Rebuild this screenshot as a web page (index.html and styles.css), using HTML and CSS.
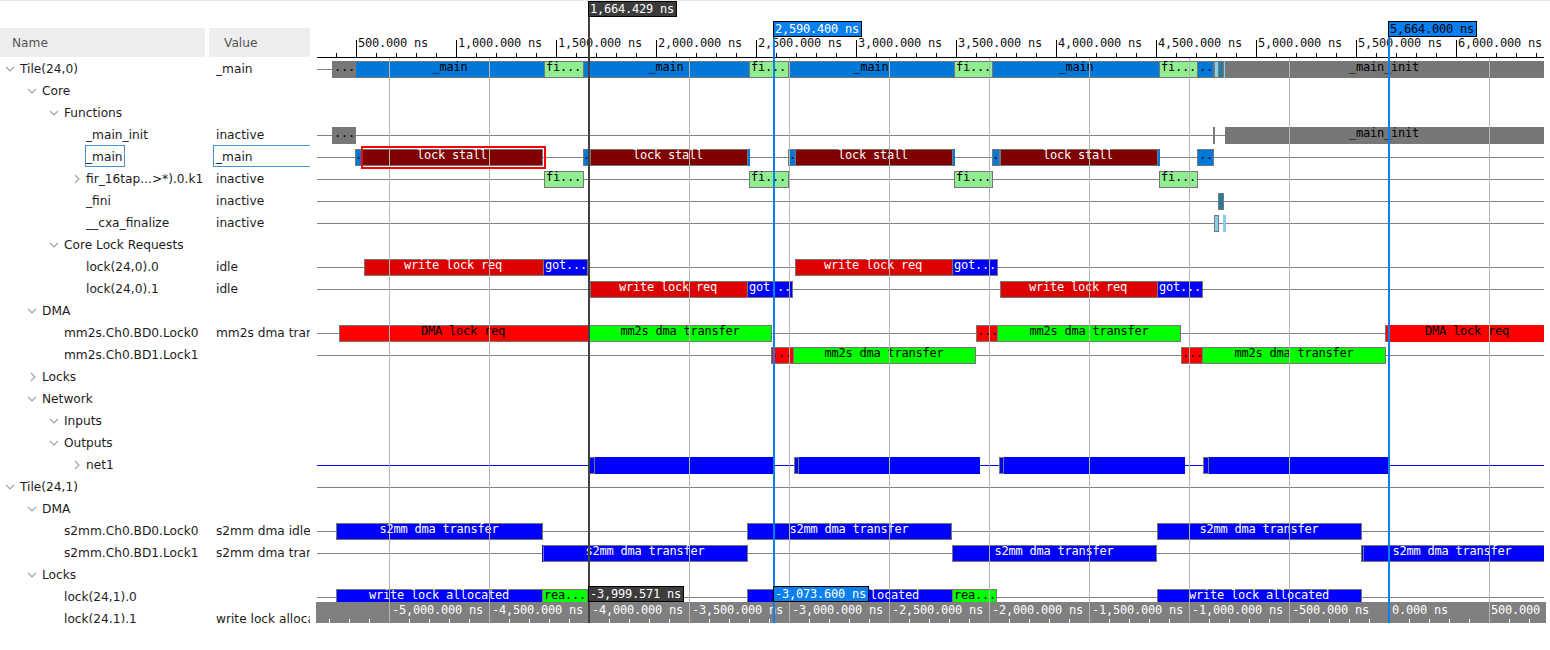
FILE: index.html
```html
<!DOCTYPE html>
<html>
<head>
  <title>Trace viewer</title>
  <link rel="stylesheet" href="styles.css">
</head>
<body>
  <svg width="0" height="0" class="defs">
    <defs>
      <polyline id="down" points="1,1 5,5 9,1"/>
      <polyline id="right" points="2,0 6,4 2,8"/>
    </defs>
  </svg>
  <div class="app">
    <div class="tree">
      <div class="head">
        <div class="head-name">Name</div>
        <div class="head-value">Value</div>
      </div>
      <div class="row l0"><div class="name"><svg class="chev"><use href="#down" y="3"/></svg>Tile(24,0)</div><div class="value">_main</div></div>
      <div class="row l1"><div class="name"><svg class="chev"><use href="#down" y="3"/></svg>Core</div><div class="value"></div></div>
      <div class="row l2"><div class="name"><svg class="chev"><use href="#down" y="3"/></svg>Functions</div><div class="value"></div></div>
      <div class="row l3"><div class="name"><span class="nochev"></span>_main_init</div><div class="value">inactive</div></div>
      <div class="row l3 selected"><div class="name"><span class="nochev"></span><span class="sel-name">_main</span></div><div class="value"><span class="sel-value">_main</span></div></div>
      <div class="row l3"><div class="name"><svg class="chev"><use href="#right" x="2" y="2"/></svg>fir_16tap...&gt;*).0.k1</div><div class="value">inactive</div></div>
      <div class="row l3"><div class="name"><span class="nochev"></span>_fini</div><div class="value">inactive</div></div>
      <div class="row l3"><div class="name"><span class="nochev"></span>__cxa_finalize</div><div class="value">inactive</div></div>
      <div class="row l2"><div class="name"><svg class="chev"><use href="#down" y="3"/></svg>Core Lock Requests</div><div class="value"></div></div>
      <div class="row l3"><div class="name"><span class="nochev"></span>lock(24,0).0</div><div class="value">idle</div></div>
      <div class="row l3"><div class="name"><span class="nochev"></span>lock(24,0).1</div><div class="value">idle</div></div>
      <div class="row l1"><div class="name"><svg class="chev"><use href="#down" y="3"/></svg>DMA</div><div class="value"></div></div>
      <div class="row l2"><div class="name"><span class="nochev"></span>mm2s.Ch0.BD0.Lock0</div><div class="value">mm2s dma transfer</div></div>
      <div class="row l2"><div class="name"><span class="nochev"></span>mm2s.Ch0.BD1.Lock1</div><div class="value"></div></div>
      <div class="row l1"><div class="name"><svg class="chev"><use href="#right" x="2" y="2"/></svg>Locks</div><div class="value"></div></div>
      <div class="row l1"><div class="name"><svg class="chev"><use href="#down" y="3"/></svg>Network</div><div class="value"></div></div>
      <div class="row l2"><div class="name"><svg class="chev"><use href="#down" y="3"/></svg>Inputs</div><div class="value"></div></div>
      <div class="row l2"><div class="name"><svg class="chev"><use href="#down" y="3"/></svg>Outputs</div><div class="value"></div></div>
      <div class="row l3"><div class="name"><svg class="chev"><use href="#right" x="2" y="2"/></svg>net1</div><div class="value"></div></div>
      <div class="row l0"><div class="name"><svg class="chev"><use href="#down" y="3"/></svg>Tile(24,1)</div><div class="value"></div></div>
      <div class="row l1"><div class="name"><svg class="chev"><use href="#down" y="3"/></svg>DMA</div><div class="value"></div></div>
      <div class="row l2"><div class="name"><span class="nochev"></span>s2mm.Ch0.BD0.Lock0</div><div class="value">s2mm dma idle</div></div>
      <div class="row l2"><div class="name"><span class="nochev"></span>s2mm.Ch0.BD1.Lock1</div><div class="value">s2mm dma transfer</div></div>
      <div class="row l1"><div class="name"><svg class="chev"><use href="#down" y="3"/></svg>Locks</div><div class="value"></div></div>
      <div class="row l2"><div class="name"><span class="nochev"></span>lock(24,1).0</div><div class="value"></div></div>
      <div class="row l2"><div class="name"><span class="nochev"></span>lock(24,1).1</div><div class="value">write lock allocated</div></div>
    </div>

    <!-- waveform canvas, viewBox uses page coordinates -->
    <svg class="wave" width="1232" height="624" viewBox="316 0 1232 624">
      <defs>
        <pattern id="ticks-top" x="336" y="53" width="20" height="4" patternUnits="userSpaceOnUse"><rect width="1" height="4" fill="#000"/></pattern>
        <pattern id="ticks-major" x="356" y="40" width="100" height="17" patternUnits="userSpaceOnUse"><rect width="1" height="17" fill="#000"/></pattern>
        <pattern id="ticks-bottom" x="329" y="619" width="20" height="5" patternUnits="userSpaceOnUse"><rect width="1" height="4" fill="#fff"/></pattern>
        <clipPath id="wave-clip"><rect x="316" y="0" width="1228" height="624"/></clipPath>
      </defs>

      <!-- top axis -->
      <rect x="317" y="57" width="1227" height="1" fill="#000"/>
      <rect x="336" y="53" width="1208" height="4" fill="url(#ticks-top)"/>
      <rect x="356" y="40" width="1188" height="17" fill="url(#ticks-major)"/>
      <g class="mono axis-top">
        <text x="358" y="47">500.000 ns</text>
        <text x="458" y="47">1,000.000 ns</text>
        <text x="558" y="47">1,500.000 ns</text>
        <text x="658" y="47">2,000.000 ns</text>
        <text x="758" y="47">2,500.000 ns</text>
        <text x="858" y="47">3,000.000 ns</text>
        <text x="958" y="47">3,500.000 ns</text>
        <text x="1058" y="47">4,000.000 ns</text>
        <text x="1158" y="47">4,500.000 ns</text>
        <text x="1258" y="47">5,000.000 ns</text>
        <text x="1358" y="47">5,500.000 ns</text>
        <text x="1458" y="47">6,000.000 ns</text>
      </g>

      <g class="mono" clip-path="url(#wave-clip)">
        <!-- Tile(24,0) -->
        <g transform="translate(0,61.5)">
          <line class="sig" x1="317" x2="1544" y1="8" y2="8"/>
          <rect class="bar grey" x="332.5" width="23"/><text x="334" y="9.5">...</text>
          <rect class="bar func" x="355.5" width="189"/><text class="mid" x="450" y="9.5">_main</text>
          <rect class="bar fi" x="544.5" width="39"/><text x="546" y="9.5">fi...</text>
          <rect class="bar func" x="583.5" width="166"/><text class="mid" x="666" y="9.5">_main</text>
          <rect class="bar fi" x="749.5" width="39"/><text x="751" y="9.5">fi...</text>
          <rect class="bar func" x="788.5" width="166"/><text class="mid" x="871" y="9.5">_main</text>
          <rect class="bar fi" x="954.5" width="38"/><text x="956" y="9.5">fi...</text>
          <rect class="bar func" x="992.5" width="167"/><text class="mid" x="1076" y="9.5">_main</text>
          <rect class="bar fi" x="1159.5" width="38"/><text x="1161" y="9.5">fi...</text>
          <rect class="bar func" x="1197.5" width="16"/><text x="1199" y="9.5">..</text>
          <rect class="bar sky" x="1214.5" width="4"/>
          <rect class="bar teal" x="1218.5" width="5"/>
          <rect class="bar sky plain" x="1224" width="1"/>
          <rect class="bar grey" x="1225.5" width="320"/><text class="mid" x="1384" y="9.5">_main_init</text>
        </g>
        <!-- _main_init -->
        <g transform="translate(0,127.5)">
          <line class="sig" x1="317" x2="1544" y1="8" y2="8"/>
          <rect class="bar grey" x="332.5" width="23"/><text x="334" y="9.5">...</text>
          <rect class="bar grey plain" x="1213" width="2"/>
          <rect class="bar grey" x="1225.5" width="320"/><text class="mid" x="1384" y="9.5">_main_init</text>
        </g>
        <!-- _main -->
        <g transform="translate(0,149.5)">
          <line class="sig" x1="317" x2="1544" y1="8" y2="8"/>
          <rect class="bar func" x="355.5" width="7"/><text x="355" y="9.5">.</text>
          <rect class="bar stall" x="362.5" width="180"/><text class="mid white" x="452" y="9.5">lock stall</text>
          <rect class="bar func" x="583.5" width="7"/><text x="583" y="9.5">.</text>
          <rect class="bar stall" x="590.5" width="157"/><text class="mid white" x="668" y="9.5">lock stall</text>
          <rect class="bar func plain" x="748" width="2"/>
          <rect class="bar func" x="788.5" width="7"/><text x="789" y="9.5">.</text>
          <rect class="bar stall" x="795.5" width="157"/><text class="mid white" x="873" y="9.5">lock stall</text>
          <rect class="bar func plain" x="953" width="2"/>
          <rect class="bar func" x="992.5" width="7"/><text x="992" y="9.5">.</text>
          <rect class="bar stall" x="1000.5" width="157"/><text class="mid white" x="1078" y="9.5">lock stall</text>
          <rect class="bar func plain" x="1158" width="2"/>
          <rect class="bar func" x="1197.5" width="16"/><text x="1199" y="9.5">..</text>
        </g>
        <!-- fir_16tap -->
        <g transform="translate(0,171.5)">
          <line class="sig" x1="317" x2="1544" y1="8" y2="8"/>
          <rect class="bar fi" x="544.5" width="39"/><text x="546" y="9.5">fi...</text>
          <rect class="bar fi" x="749.5" width="39"/><text x="751" y="9.5">fi...</text>
          <rect class="bar fi" x="954.5" width="38"/><text x="956" y="9.5">fi...</text>
          <rect class="bar fi" x="1159.5" width="38"/><text x="1161" y="9.5">fi...</text>
        </g>
        <!-- _fini -->
        <g transform="translate(0,193.5)">
          <line class="sig" x1="317" x2="1544" y1="8" y2="8"/>
          <rect class="bar teal" x="1218.5" width="5"/>
        </g>
        <!-- __cxa_finalize -->
        <g transform="translate(0,215.5)">
          <line class="sig" x1="317" x2="1544" y1="8" y2="8"/>
          <rect class="bar sky" x="1214.5" width="4"/>
          <rect class="bar sky plain" x="1223" width="3"/>
        </g>
        <!-- lock(24,0).0 -->
        <g transform="translate(0,259.5)">
          <line class="sig" x1="317" x2="1544" y1="8" y2="8"/>
          <rect class="bar req" x="364.5" width="179"/><text class="mid white" x="453" y="9.5">write lock req</text>
          <rect class="bar got" x="543.5" width="44"/><text class="white" x="545" y="9.5">got...</text>
          <rect class="bar req" x="795.5" width="157"/><text class="mid white" x="873" y="9.5">write lock req</text>
          <rect class="bar got" x="952.5" width="45"/><text class="white" x="954" y="9.5">got...</text>
        </g>
        <!-- lock(24,0).1 -->
        <g transform="translate(0,281.5)">
          <line class="sig" x1="317" x2="1544" y1="8" y2="8"/>
          <rect class="bar req" x="590.5" width="157"/><text class="mid white" x="668" y="9.5">write lock req</text>
          <rect class="bar got" x="747.5" width="45"/><text class="white" x="749" y="9.5">got...</text>
          <rect class="bar req" x="1000.5" width="157"/><text class="mid white" x="1078" y="9.5">write lock req</text>
          <rect class="bar got" x="1157.5" width="45"/><text class="white" x="1159" y="9.5">got...</text>
        </g>
        <!-- mm2s.Ch0.BD0.Lock0 -->
        <g transform="translate(0,325.5)">
          <line class="sig" x1="317" x2="1544" y1="8" y2="8"/>
          <rect class="bar dma-req" x="339.5" width="250"/><text class="mid" x="463" y="9.5">DMA lock req</text>
          <rect class="bar dma" x="589.5" width="182"/><text class="mid" x="680" y="9.5">mm2s dma transfer</text>
          <rect class="bar dma-req" x="976.5" width="21"/><text x="977" y="9.5">...</text>
          <rect class="bar dma" x="997.5" width="183"/><text class="mid" x="1089" y="9.5">mm2s dma transfer</text>
          <rect class="bar dma-req" x="1385.5" width="3"/>
          <rect class="bar dma-req plain" x="1389" width="156"/><text class="mid" x="1467" y="9.5">DMA lock req</text>
        </g>
        <!-- mm2s.Ch0.BD1.Lock1 -->
        <g transform="translate(0,347.5)">
          <line class="sig" x1="317" x2="1544" y1="8" y2="8"/>
          <rect class="bar dma-req" x="771.5" width="22"/><text x="771" y="9.5">...</text>
          <rect class="bar dma" x="793.5" width="182"/><text class="mid" x="884" y="9.5">mm2s dma transfer</text>
          <rect class="bar dma-req" x="1181.5" width="21"/><text x="1182" y="9.5">...</text>
          <rect class="bar dma" x="1202.5" width="183"/><text class="mid" x="1294" y="9.5">mm2s dma transfer</text>
        </g>
        <!-- net1 -->
        <g transform="translate(0,457.5)">
          <line class="sig net" x1="317" x2="1544" y1="8" y2="8"/>
          <rect class="bar got" x="589.5" width="5"/>
          <rect class="bar got plain" x="595" width="178"/>
          <rect class="bar got" x="794.5" width="4"/>
          <rect class="bar got plain" x="799" width="181"/>
          <rect class="bar got" x="999.5" width="4"/>
          <rect class="bar got plain" x="1004" width="181"/>
          <rect class="bar got" x="1203.5" width="5"/>
          <rect class="bar got plain" x="1209" width="180"/>
        </g>
        <!-- Tile(24,1) -->
        <line class="sig" x1="317" x2="1544" y1="487.5" y2="487.5"/>
        <!-- s2mm.Ch0.BD0.Lock0 -->
        <g transform="translate(0,523.5)">
          <line class="sig" x1="317" x2="1544" y1="8" y2="8"/>
          <rect class="bar got" x="336.5" width="206"/><text class="mid white" x="439" y="9.5">s2mm dma transfer</text>
          <rect class="bar got" x="747.5" width="204"/><text class="mid white" x="849" y="9.5">s2mm dma transfer</text>
          <rect class="bar got" x="1157.5" width="204"/><text class="mid white" x="1259" y="9.5">s2mm dma transfer</text>
        </g>
        <!-- s2mm.Ch0.BD1.Lock1 -->
        <g transform="translate(0,545.5)">
          <line class="sig" x1="317" x2="1544" y1="8" y2="8"/>
          <rect class="bar got plain" x="542" width="2"/>
          <rect class="bar got" x="543.5" width="204"/><text class="mid white" x="645" y="9.5">s2mm dma transfer</text>
          <rect class="bar got" x="952.5" width="204"/><text class="mid white" x="1054" y="9.5">s2mm dma transfer</text>
          <rect class="bar got" x="1361.5" width="2"/>
          <rect class="bar got" x="1363.5" width="182"/><text class="mid white" x="1452" y="9.5">s2mm dma transfer</text>
        </g>
        <!-- lock(24,1).0 -->
        <g transform="translate(0,589.5)">
          <line class="sig" x1="317" x2="1544" y1="8" y2="8"/>
          <rect class="bar got" x="336.5" width="206"/><text class="mid white" x="439" y="9.5">write lock allocated</text>
          <rect class="bar ready" x="542.5" width="45"/><text x="544" y="9.5">rea...</text>
          <rect class="bar got" x="747.5" width="205"/><text class="mid white" x="849" y="9.5">write lock allocated</text>
          <rect class="bar ready" x="952.5" width="44"/><text x="954" y="9.5">rea...</text>
          <rect class="bar got" x="1157.5" width="204"/><text class="mid white" x="1259" y="9.5">write lock allocated</text>
        </g>
      </g>

      <!-- bottom axis -->
      <rect x="316" y="602" width="1230" height="22" fill="#808080"/>
      <rect x="329" y="619" width="1217" height="5" fill="url(#ticks-bottom)"/>
      <g class="mono white">
        <text x="392" y="614">-5,000.000 ns</text>
        <text x="492" y="614">-4,500.000 ns</text>
        <text x="592" y="614">-4,000.000 ns</text>
        <text x="692" y="614">-3,500.000 ns</text>
        <text x="792" y="614">-3,000.000 ns</text>
        <text x="892" y="614">-2,500.000 ns</text>
        <text x="992" y="614">-2,000.000 ns</text>
        <text x="1092" y="614">-1,500.000 ns</text>
        <text x="1192" y="614">-1,000.000 ns</text>
        <text x="1292" y="614">-500.000 ns</text>
        <text x="1392" y="614">0.000 ns</text>
        <text x="1491" y="614">500.000</text>
      </g>

      <!-- grid -->
      <path class="grid" d="M389.5 58V624M489.5 58V624M589.5 58V624M689.5 58V624M789.5 58V624M889.5 58V624M989.5 58V624M1089.5 58V624M1189.5 58V624M1289.5 58V624M1389.5 58V624M1489.5 58V624"/>

      <!-- selected slice -->
      <rect class="selection" x="362" y="147" width="183" height="21"/>

      <!-- cursors -->
      <rect class="cursor-dark" x="588" y="17" width="2" height="607"/>
      <rect class="cursor-blue" x="773" y="37" width="2" height="587"/>
      <rect class="cursor-blue" x="1388" y="37" width="2" height="587"/>

      <g class="mono">
        <rect class="flag dark" x="588.5" y="1.5" width="88" height="15"/>
        <text class="white" x="590" y="13">1,664.429 ns</text>
        <rect class="flag blue" x="773.5" y="21.5" width="88" height="15"/>
        <text class="white" x="775" y="33">2,590.400 ns</text>
        <rect class="flag blue" x="1388.5" y="21.5" width="88" height="15"/>
        <text x="1390" y="33">5,664.000 ns</text>
        <rect class="flag dark" x="588.5" y="586.5" width="95" height="15"/>
        <text class="white" x="590" y="598">-3,999.571 ns</text>
        <rect class="flag blue" x="773.5" y="586.5" width="95" height="15"/>
        <text class="white" x="775" y="598">-3,073.600 ns</text>
      </g>
    </svg>
  </div>
</body>
</html>
```

FILE: styles.css
```css
html, body {
  margin: 0;
  height: 100%;
  background-color: #ffffff;
}

body {
  border-top: 1px solid #e6e6e6;
  box-sizing: border-box;
  overflow: hidden;
}

.defs {
  position: absolute;
}

.app {
  display: flex;
  height: 623px;
  overflow: hidden;
  margin-top: -1px;
}

/* Name / value tree */
.tree {
  width: 316px;
  flex-shrink: 0;
  padding-top: 28px;
  font-family: "DejaVu Sans", sans-serif;
  font-size: 12.2px;
  color: #1c1c1c;
}

.head {
  display: flex;
  height: 29px;
  line-height: 31px;
  color: #555555;
  margin-bottom: 1px;
}

.head-name {
  width: 193px;
  padding-left: 12px;
  margin-right: 4px;
  background-color: #eeeeee;
}

.head-value {
  width: 86px;
  padding-left: 15px;
  background-color: #eeeeee;
}

.row {
  display: grid;
  grid-template-columns: 216px 94px;
  height: 22px;
  line-height: 22px;
  white-space: nowrap;
}

.name {
  display: flex;
  align-items: center;
  overflow: hidden;
}

.value {
  overflow: hidden;
}

.l0 .name { padding-left: 5px; }
.l1 .name { padding-left: 27px; }
.l2 .name { padding-left: 49px; }
.l3 .name { padding-left: 71px; }

.chev, .nochev {
  display: block;
  width: 10px;
  height: 12px;
  margin-right: 5px;
  flex-shrink: 0;
}

.chev {
  fill: none;
  stroke: #a4a4a4;
  stroke-width: 1.2;
}

.sel-name {
  display: block;
  align-self: flex-start;
  height: 22px;
  line-height: 22px;
  margin: -1px 0 0 -1px;
  padding-right: 1px;
  box-sizing: border-box;
  border: 1px solid #4a90d0;
}

.selected .name {
  overflow: visible;
}

.selected .value {
  overflow: visible;
}

.sel-value {
  display: block;
  height: 22px;
  line-height: 22px;
  margin: -1px 0 0 -3px;
  padding-left: 2px;
  box-sizing: border-box;
  border: 1px solid #4a90d0;
  border-right: none;
}

/* Waveform canvas */
.wave {
  display: block;
  flex-shrink: 0;
  shape-rendering: crispEdges;
}

.mono {
  font-family: "DejaVu Sans Mono", monospace;
  font-size: 12px;
  letter-spacing: -0.22px;
  fill: #000000;
}

.axis-top {
  fill: #111111;
}

.white, .white text {
  fill: #ffffff;
}

.mid {
  text-anchor: middle;
}

.sig {
  stroke: #808080;
  stroke-width: 1;
}

.sig.net {
  stroke: #0000ee;
}

.bar {
  height: 16px;
  stroke: #777777;
  stroke-width: 1;
}

.bar.plain {
  stroke: none;
  y: -0.5px;
  height: 17px;
}

.grey { fill: #777777; }
.func { fill: #0078d7; }
.fi { fill: #90ee90; }
.stall { fill: #800000; }
.teal { fill: #2a7a9b; }
.sky { fill: #87ceeb; }
.req { fill: #dd0000; }
.got { fill: #0000ff; }
.dma-req { fill: #ff0000; }
.dma { fill: #00ff00; }
.ready { fill: #00ff00; }

.grid {
  fill: none;
  stroke: #b4b4b4;
  stroke-width: 1;
}

.selection {
  fill: none;
  stroke: #ff0000;
  stroke-width: 2;
}

.cursor-dark {
  fill: #404040;
}

.cursor-blue {
  fill: #0a7ff0;
}

.flag {
  stroke: #000000;
  stroke-width: 1;
}

.flag.dark {
  fill: #3c3c3c;
}

.flag.blue {
  fill: #0a7ff0;
}
```
